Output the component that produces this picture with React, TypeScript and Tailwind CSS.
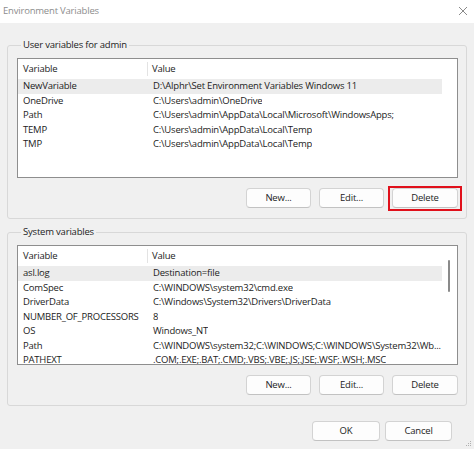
import React from 'react';

type Row = { name: string; value: string; selected?: boolean };

const userRows: Row[] = [
  { name: 'NewVariable', value: 'D:\\Alphr\\Set Environment Variables Windows 11', selected: true },
  { name: 'OneDrive', value: 'C:\\Users\\admin\\OneDrive' },
  { name: 'Path', value: 'C:\\Users\\admin\\AppData\\Local\\Microsoft\\WindowsApps;' },
  { name: 'TEMP', value: 'C:\\Users\\admin\\AppData\\Local\\Temp' },
  { name: 'TMP', value: 'C:\\Users\\admin\\AppData\\Local\\Temp' },
];

const systemRows: Row[] = [
  { name: 'asl.log', value: 'Destination=file', selected: true },
  { name: 'ComSpec', value: 'C:\\WINDOWS\\system32\\cmd.exe' },
  { name: 'DriverData', value: 'C:\\Windows\\System32\\Drivers\\DriverData' },
  { name: 'NUMBER_OF_PROCESSORS', value: '8' },
  { name: 'OS', value: 'Windows_NT' },
  { name: 'Path', value: 'C:\\WINDOWS\\system32;C:\\WINDOWS;C:\\WINDOWS\\System32\\Wb...' },
  { name: 'PATHEXT', value: '.COM;.EXE;.BAT;.CMD;.VBS;.VBE;.JS;.JSE;.WSF;.WSH;.MSC' },
];

function Button({ label, width = 'w-[65px]' }: { label: string; width?: string }) {
  return (
    <div
      className={`${width} h-[20px] bg-[#fdfdfd] border border-[#d3d3d3] border-b-[#c2c2c2] rounded-[4px] flex items-center justify-center`}
    >
      {label}
    </div>
  );
}

function ListView({ rows, scroll }: { rows: Row[]; scroll?: boolean }) {
  return (
    <div className="h-[120px] border border-[#8e8e8e] bg-white flex overflow-hidden">
      <div className="w-[424px] shrink-0 flex flex-col">
        <div className="h-[20px] flex shrink-0">
          <div className="w-[130px] shrink-0 pl-[5px] flex items-center border-r border-[#e3e3e3] my-[3px]">Variable</div>
          <div className="pl-[4px] flex items-center">Value</div>
        </div>
        {rows.map((r) => (
          <div
            key={r.name}
            className={`h-[14.5px] shrink-0 flex items-center whitespace-nowrap ${r.selected ? 'bg-[#ececec]' : ''}`}
          >
            <div className="w-[131px] shrink-0 overflow-hidden pl-[5px]">{r.name}</div>
            <div className="pl-[4px] overflow-hidden">{r.value}</div>
          </div>
        ))}
      </div>
      <div className="w-[14px] shrink-0">
        {scroll && <div className="mt-[14px] ml-[6px] w-[2px] h-[32px] bg-[#8a8a8a] rounded-full" />}
      </div>
    </div>
  );
}

function GroupBox({ title, rows, scroll, className = '' }: { title: string; rows: Row[]; scroll?: boolean; className?: string }) {
  return (
    <fieldset className={`border border-[#d8d8d8] rounded-[3px] pl-[9px] pr-[8px] pb-[10px] ${className}`}>
      <legend className="ml-[4px] px-[2px] leading-[16px]">{title}</legend>
      <div className="mt-[5px]">
        <ListView rows={rows} scroll={scroll} />
      </div>
      <div className="flex justify-end gap-[8px] mt-[10px]">
        <Button label="New..." />
        <Button label="Edit..." />
        <div className="relative">
          <Button label="Delete" width="w-[66px]" />
          {!scroll && (
            <span className="absolute -left-[4px] -right-[4px] -top-[2px] -bottom-[3px] border-2 border-[#e0101b]" />
          )}
        </div>
      </div>
    </fieldset>
  );
}

export default function App() {
  return (
    <div className="w-[474px] h-[449px] bg-[#f0f0f0] flex flex-col relative overflow-hidden font-['Open_Sans',sans-serif] text-[9.5px] tracking-[-0.2px] text-[#1c1c1c]">
      <div className="h-[23px] bg-white flex items-center justify-between pl-[3px] pr-[6px] shrink-0">
        <span className="text-[#8d8d8d]">Environment Variables</span>
        <svg width="10" height="10" viewBox="0 0 10 10" className="mt-[-2px]">
          <path d="M1 1 L9 9 M9 1 L1 9" stroke="#8a8a8a" strokeWidth="1" />
        </svg>
      </div>
      <div className="px-[7px] pt-[14px] flex flex-col">
        <GroupBox title="User variables for admin" rows={userRows} />
        <GroupBox title="System variables" rows={systemRows} scroll className="mt-[5px]" />
        <div className="flex justify-end gap-[5px] mt-[15px] pr-[15px]">
          <Button label="OK" width="w-[68px]" />
          <Button label="Cancel" width="w-[67px]" />
        </div>
      </div>
      <svg width="6" height="6" viewBox="0 0 6 6" className="absolute right-[2px] bottom-[2px]">
        <rect x="4" y="0" width="1" height="1" fill="#b0b0b0" />
        <rect x="2" y="2" width="1" height="1" fill="#b0b0b0" />
        <rect x="4" y="2" width="1" height="1" fill="#b0b0b0" />
        <rect x="0" y="4" width="1" height="1" fill="#b0b0b0" />
        <rect x="2" y="4" width="1" height="1" fill="#b0b0b0" />
        <rect x="4" y="4" width="1" height="1" fill="#b0b0b0" />
      </svg>
    </div>
  );
}
